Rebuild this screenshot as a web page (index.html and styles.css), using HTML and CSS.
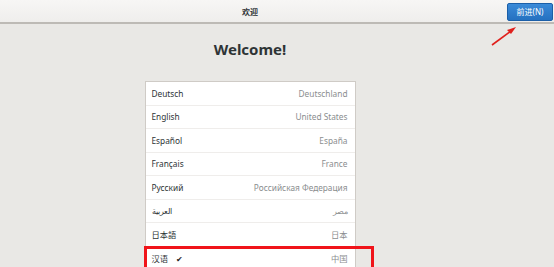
FILE: index.html
```html
<!DOCTYPE html>
<html lang="zh-CN">
<head>
    <meta charset="UTF-8">
    <title>欢迎</title>
    <link rel="stylesheet" href="styles.css">
</head>
<body>
    <div class="header">
        <div class="title">欢迎</div>
        <div class="actions">
            <button class="next">前进(N)</button>
        </div>
    </div>
    <svg class="arrow" width="30" height="24" viewBox="0 0 30 24">
        <line x1="3" y1="21" x2="22" y2="7" stroke="#e0201c" stroke-width="1.6"/>
        <polygon points="27,3 18,6 22,10" fill="#e0201c"/>
    </svg>
    <div class="main">
        <h1>Welcome!</h1>
        <div class="list">
            <div class="row"><span class="lang">Deutsch</span><span class="region">Deutschland</span></div>
            <div class="row"><span class="lang">English</span><span class="region">United States</span></div>
            <div class="row"><span class="lang">Español</span><span class="region">España</span></div>
            <div class="row"><span class="lang">Français</span><span class="region">France</span></div>
            <div class="row"><span class="lang">Русский</span><span class="region">Российская Федерация</span></div>
            <div class="row"><span class="lang">العربية</span><span class="region">مصر</span></div>
            <div class="row"><span class="lang">日本語</span><span class="region">日本</span></div>
            <div class="row selected"><span class="lang">汉语 <span class="check">✔</span></span><span class="region">中国</span></div>
            <div class="highlight"></div>
        </div>
    </div>
</body>
</html>
```

FILE: styles.css
```css
body {
    margin: 0;
    font-family: "Noto Sans", "Noto Sans CJK SC", sans-serif;
    background-color: #e9e8e5;
    color: #2e3436;
    overflow: hidden;
    height: 267px;
}
.header {
    display: grid;
    grid-template-columns: 500px 1fr;
    align-items: center;
    height: 22px;
    background: linear-gradient(#f7f6f5, #efeeec);
    border-bottom: 2px solid #bdbab5;
}
.title {
    text-align: center;
    font-size: 8px;
    font-weight: bold;
}
.actions {
    display: flex;
    justify-content: flex-end;
    padding-right: 1px;
}
.next {
    width: 46px;
    height: 18px;
    margin-top: 1px;
    padding: 0;
    border: 1px solid #1b5fa8;
    border-radius: 2px;
    background: linear-gradient(#3a8ad8, #2571c0);
    color: #fff;
    font-family: "Noto Sans", "Noto Sans CJK SC", sans-serif;
    font-size: 8px;
}
.arrow {
    position: absolute;
    left: 489px;
    top: 24px;
}
.main {
    width: 500px;
    text-align: center;
}
h1 {
    margin: 15px 0 0;
    height: 42px;
    font-size: 15px;
    line-height: 20px;
    font-weight: bold;
    color: #2e3436;
}
.list {
    position: relative;
    width: 209px;
    margin: 0 auto;
    background: #fff;
    border: 1px solid #cfcbc6;
    text-align: left;
}
.row {
    display: flex;
    justify-content: space-between;
    align-items: center;
    box-sizing: border-box;
    height: 23.5px;
    padding: 0 7px 0 6px;
    border-bottom: 1px solid #efedeb;
    font-size: 8.3px;
}
.region {
    color: #8b8e8f;
}
.check {
    margin-left: 6px;
    font-size: 8px;
    color: #1e2224;
}
.highlight {
    position: absolute;
    left: -2px;
    top: 164px;
    width: 224px;
    height: 40px;
    border: 3px solid #f0141a;
}
```
